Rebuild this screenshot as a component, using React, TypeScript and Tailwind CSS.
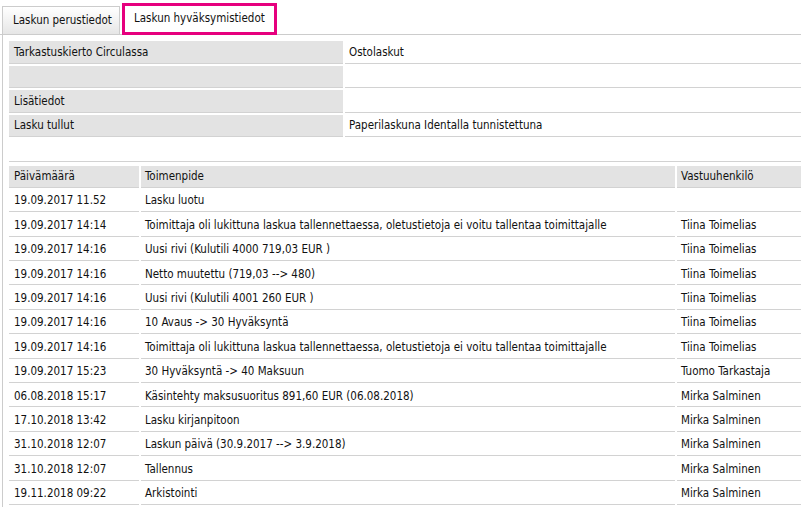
const info: [string, string][] = [
  ["Tarkastuskierto Circulassa", "Ostolaskut"],
  ["", ""],
  ["Lisätiedot", ""],
  ["Lasku tullut", "Paperilaskuna Identalla tunnistettuna"],
];

const history: [string, string, string][] = [
  ["19.09.2017 11.52", "Lasku luotu", ""],
  ["19.09.2017 14:14", "Toimittaja oli lukittuna laskua tallennettaessa, oletustietoja ei voitu tallentaa toimittajalle", "Tiina Toimelias"],
  ["19.09.2017 14:16", "Uusi rivi (Kulutili 4000 719,03 EUR )", "Tiina Toimelias"],
  ["19.09.2017 14:16", "Netto muutettu (719,03 --> 480)", "Tiina Toimelias"],
  ["19.09.2017 14:16", "Uusi rivi (Kulutili 4001 260 EUR )", "Tiina Toimelias"],
  ["19.09.2017 14:16", "10 Avaus -> 30 Hyväksyntä", "Tiina Toimelias"],
  ["19.09.2017 14:16", "Toimittaja oli lukittuna laskua tallennettaessa, oletustietoja ei voitu tallentaa toimittajalle", "Tiina Toimelias"],
  ["19.09.2017 15:23", "30 Hyväksyntä -> 40 Maksuun", "Tuomo Tarkastaja"],
  ["06.08.2018 15:17", "Käsintehty maksusuoritus 891,60 EUR (06.08.2018)", "Mirka Salminen"],
  ["17.10.2018 13:42", "Lasku kirjanpitoon", "Mirka Salminen"],
  ["31.10.2018 12:07", "Laskun päivä (30.9.2017 --> 3.9.2018)", "Mirka Salminen"],
  ["31.10.2018 12:07", "Tallennus", "Mirka Salminen"],
  ["19.11.2018 09:22", "Arkistointi", "Mirka Salminen"],
];

export default function App() {
  return (
    <div className="w-[801px] h-[507px] overflow-hidden bg-white text-[#111] text-[11.5px] font-['DejaVu_Sans_Condensed','DejaVu_Sans',sans-serif]">
      {/* Tabs */}
      <div className="flex items-end h-[35px] border-b border-[#cccccc]">
        <div className="ml-[2px] w-[118px] h-[28px] flex items-center pl-[10px] border border-b-0 border-[#cccccc] bg-gradient-to-b from-white to-[#e6e6e6] whitespace-nowrap">
          Laskun perustiedot
        </div>
        <div className="ml-[2px] -mb-px w-[155px] h-[32px] flex items-center pl-[9px] border-[3px] border-[#e6007e] bg-white whitespace-nowrap">
          Laskun hyväksymistiedot
        </div>
      </div>

      {/* Content */}
      <div className="ml-[2px] h-[472px] border-l border-[#cccccc] pl-[6px] pt-[6px]">
        <div className="grid grid-cols-[334px_1fr] gap-[2px]">
          {info.map(([label, value], i) => (
            <div key={i} className="contents">
              <div className="h-[22.5px] flex items-center pl-[5px] pt-px bg-[#e3e3e3] border-b border-[#d2d2d2] whitespace-nowrap">
                {label}
              </div>
              <div className="h-[22.5px] flex items-center pl-[4px] pt-px border-b border-[#d2d2d2] whitespace-nowrap">
                {value}
              </div>
            </div>
          ))}
          <div className="col-span-2 h-[22.5px] border-b border-[#d2d2d2]" />
        </div>

        <div className="mt-[4px] grid grid-cols-[130px_534px_1fr] gap-[2px]">
          <div className="h-[22.4px] flex items-center pl-[5px] pt-px bg-[#e3e3e3] border-b border-[#d2d2d2]">Päivämäärä</div>
          <div className="h-[22.4px] flex items-center pl-[4px] pt-px bg-[#e3e3e3] border-b border-[#d2d2d2]">Toimenpide</div>
          <div className="h-[22.4px] flex items-center pl-[4px] pt-px bg-[#e3e3e3] border-b border-[#d2d2d2]">Vastuuhenkilö</div>
          {history.map(([date, action, person], i) => (
            <div key={i} className="contents">
              <div className="h-[22.4px] flex items-center pl-[5px] pt-px border-b border-[#d2d2d2] whitespace-nowrap">{date}</div>
              <div className="h-[22.4px] flex items-center pl-[4px] pt-px border-b border-[#d2d2d2] whitespace-nowrap">{action}</div>
              <div className="h-[22.4px] flex items-center pl-[4px] pt-px border-b border-[#d2d2d2] whitespace-nowrap">{person}</div>
            </div>
          ))}
        </div>
      </div>
    </div>
  );
}
